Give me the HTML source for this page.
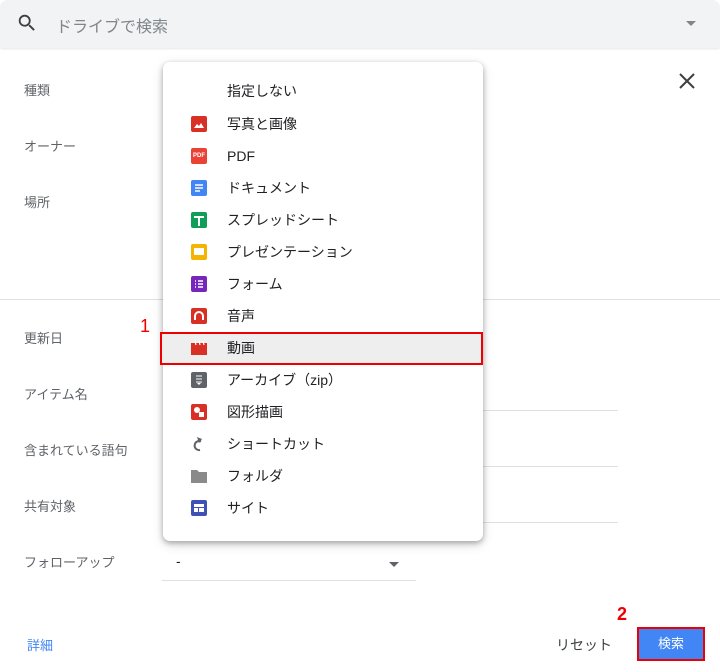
<!DOCTYPE html>
<html><head><meta charset="utf-8"><style>
*{margin:0;padding:0;box-sizing:border-box}
body{width:720px;height:672px;background:#fff;font-family:"Liberation Sans","Noto Sans CJK JP",sans-serif;position:relative;overflow:hidden;color:#3c4043}
.abs{position:absolute}
.lbl{position:absolute;left:24px;font-size:13px;color:#5f6368;line-height:16px}
.hl{position:absolute;height:1px;background:#e0e0e0}
.menu{position:absolute;left:163px;top:62px;width:320px;height:479px;background:#fff;border-radius:7px;box-shadow:0 2px 6px rgba(0,0,0,.3),0 4px 12px rgba(0,0,0,.12)}
.it{position:absolute;left:227px;font-size:14px;color:#202124;line-height:18px}
.ic{position:absolute;left:191px;width:16px;height:16px;border-radius:2px}
</style></head><body>
<div class="abs" style="left:0;top:0;width:720px;height:48px;background:#f1f3f4;border-radius:8px 8px 0 0;box-shadow:0 1px 2px rgba(0,0,0,.1)"></div>
<svg class="abs" style="left:16px;top:12px" width="22" height="22" viewBox="0 0 24 24"><path d="M15.5 14h-.79l-.28-.27A6.47 6.47 0 0016 9.5 6.5 6.5 0 109.5 16c1.61 0 3.09-.59 4.23-1.57l.27.28v.79l5 4.99L20.49 19l-4.99-5zm-6 0C7.01 14 5 11.99 5 9.5S7.01 5 9.5 5 14 7.01 14 9.5 11.99 14 9.5 14z" fill="#3c4043"/></svg>
<div class="abs" style="left:56px;top:13px;font-size:16px;color:#80868b">ドライブで検索</div>
<div class="abs" style="left:686px;top:21px;border-left:5px solid transparent;border-right:5px solid transparent;border-top:5px solid #80868b"></div>
<svg class="abs" style="left:678px;top:72px" width="18" height="18" viewBox="0 0 18 18"><path d="M2 2L16 16M16 2L2 16" stroke="#3c4043" stroke-width="2"/></svg>
<div class="lbl" style="top:83px">種類</div>
<div class="lbl" style="top:139px">オーナー</div>
<div class="lbl" style="top:195px">場所</div>
<div class="hl" style="left:0;top:299px;width:720px"></div>
<div class="lbl" style="top:331px">更新日</div>
<div class="lbl" style="top:387px">アイテム名</div>
<div class="lbl" style="top:443px">含まれている語句</div>
<div class="lbl" style="top:499px">共有対象</div>
<div class="lbl" style="top:555px">フォローアップ</div>
<div class="hl" style="left:480px;top:410px;width:138px"></div>
<div class="hl" style="left:480px;top:466px;width:138px"></div>
<div class="hl" style="left:480px;top:522px;width:138px"></div>
<div class="abs" style="left:176px;top:553px;font-size:14px;color:#202124">-</div>
<div class="abs" style="left:389px;top:562px;border-left:5px solid transparent;border-right:5px solid transparent;border-top:5px solid #5f6368"></div>
<div class="hl" style="left:162px;top:580px;width:254px"></div>
<div class="abs" style="left:27px;top:635px;font-size:13px;color:#4285f4">詳細</div>
<div class="abs" style="left:556px;top:635px;font-size:14px;color:#3c4043">リセット</div>
<div class="abs" style="left:617px;top:604px;font-size:18px;color:#e00;font-weight:bold">2</div>
<div class="abs" style="left:637px;top:627px;width:68px;height:34px;background:#4285f4;border:2px solid #e00;color:#fff;font-size:13px;text-align:center;line-height:30px">検索</div>
<div class="abs" style="left:140px;top:316px;font-size:18px;color:#e00">1</div>

<div class="menu"></div>
<div class="abs" style="left:160px;top:332px;width:323px;height:33px;background:#eee;border:2px solid #e00"></div>
<div class="it" style="top:82px">指定しない</div>
<div class="ic" style="top:116px;background:#d93025"><svg width="16" height="16"><path d="M3 12L6 8 8 10 10 7 13 12z" fill="#fff"/></svg></div><div class="it" style="top:115px">写真と画像</div>
<div class="ic" style="top:148px;background:#ea4335;color:#fff;font-size:6px;font-weight:bold;text-align:center;line-height:16px">PDF</div><div class="it" style="top:147px">PDF</div>
<div class="ic" style="top:180px;background:#4285f4"><svg width="16" height="16"><path d="M4 5h8M4 8h8M4 11h5" stroke="#fff" stroke-width="1.5"/></svg></div><div class="it" style="top:179px">ドキュメント</div>
<div class="ic" style="top:212px;background:#0f9d58"><svg width="16" height="16"><path d="M3 5h10M8 5v9" stroke="#fff" stroke-width="2"/></svg></div><div class="it" style="top:211px">スプレッドシート</div>
<div class="ic" style="top:244px;background:#f4b400"><div style="position:absolute;left:3px;top:4px;width:10px;height:7px;background:#fff"></div></div><div class="it" style="top:243px">プレゼンテーション</div>
<div class="ic" style="top:276px;background:#7627bb"><svg width="16" height="16"><path d="M4 5h1M7 5h5M4 8h1M7 8h5M4 11h1M7 11h5" stroke="#fff" stroke-width="1.5"/></svg></div><div class="it" style="top:275px">フォーム</div>
<div class="ic" style="top:308px;background:#d93025"><svg width="16" height="16"><path d="M4 12V8a4 4 0 018 0v4" stroke="#fff" stroke-width="2" fill="none"/></svg></div><div class="it" style="top:307px">音声</div>
<svg class="abs" style="left:191px;top:341px" width="16" height="14"><rect x="0" y="2" width="16" height="12" fill="#d93025"/><path d="M4 0l1 4M8 0l1 4M12 0l1 4" stroke="#fff" stroke-width="1.2"/></svg><div class="it" style="top:339px">動画</div>
<div class="ic" style="top:372px;background:#5f6368"><svg width="16" height="16"><path d="M5 4h6M5 7h6M5 10h6" stroke="#fff"/><path d="M6 11h4l-2 2z" fill="#fff"/></svg></div><div class="it" style="top:371px">アーカイブ（zip）</div>
<div class="ic" style="top:404px;background:#d93025"><svg width="16" height="16"><circle cx="6" cy="6" r="3" fill="#fff"/><rect x="8" y="8" width="5" height="5" fill="#fff"/></svg></div><div class="it" style="top:403px">図形描画</div>
<svg class="abs" style="left:191px;top:436px" width="16" height="16"><path d="M10 5.5a4.5 4.5 0 10-1 8.5" stroke="#5f6368" stroke-width="2" fill="none"/><path d="M6 1l5 2-3 4z" fill="#5f6368"/></svg><div class="it" style="top:435px">ショートカット</div>
<svg class="abs" style="left:191px;top:468px" width="16" height="16"><path d="M0 2h6l2 2h8v11H0z" fill="#8a8a8a"/></svg><div class="it" style="top:467px">フォルダ</div>
<div class="ic" style="top:500px;background:#3f51b5"><svg width="16" height="16"><path d="M3 4h10v3H3zM3 8h4v4H3zM8 8h5v4H8z" fill="#fff"/></svg></div><div class="it" style="top:499px">サイト</div>
</body></html>
